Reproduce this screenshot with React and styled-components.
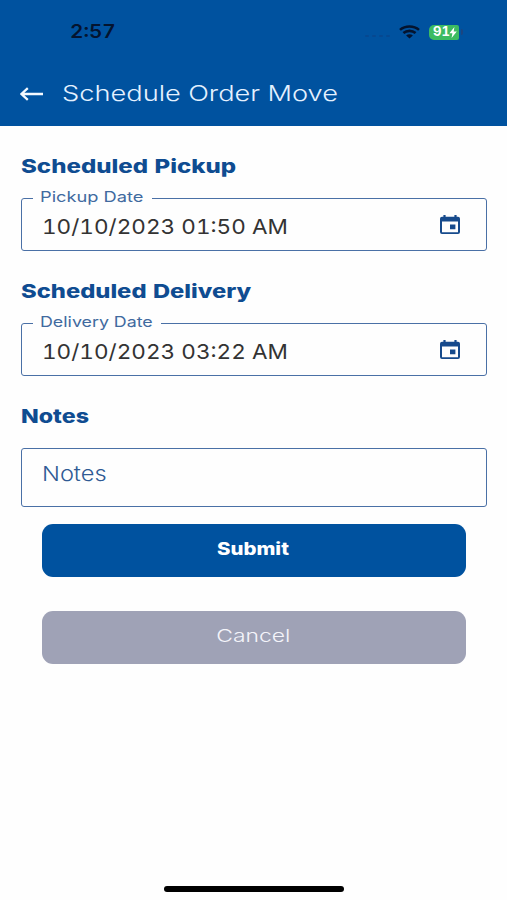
import React from 'react'
import styled, { createGlobalStyle } from 'styled-components'

const GlobalStyle = createGlobalStyle`
  * {
    box-sizing: border-box;
  }
  body {
    margin: 0;
    background: #fefefe;
    font-family: Inter, "Open Sans", sans-serif;
  }
`;
const ScreenStyle = styled.div`
  display: flex;
  flex-direction: column;
  width: 507px;
  height: 900px;
  overflow: hidden;
`;
const HeaderStyle = styled.header`
  height: 126px;
  background: #00529f;
`;
const StatusBarStyle = styled.div`
  display: flex;
  align-items: center;
  height: 64px;
  padding: 0 44px 0 70px;
`;
const StatusIconsStyle = styled.div`
  display: flex;
  align-items: center;
  margin-left: auto;
`;
const DotsStyle = styled.div`
  display: flex;
  gap: 3px;
  margin: 8px 9px 0 0;
`;
const DotStyle = styled.span`
  width: 4px;
  height: 2px;
  border-radius: 1px;
  background: #064890;
`;
const BatteryStyle = styled.div`
  display: flex;
  align-items: center;
  height: 15px;
  width: 30px;
  margin-left: 9px;
  padding-left: 4px;
  border-radius: 5px 2px 2px 5px;
  background: #3dbb61;
`;
const BatteryTipStyle = styled.span`
  width: 2px;
  height: 6px;
  margin-left: 2px;
  border-radius: 0 2px 2px 0;
  background: #1c4580;
`;
const TitleBarStyle = styled.div`
  display: flex;
  align-items: center;
  height: 57px;
  padding-left: 20px;
`;
const BackStyle = styled.svg`
  margin: 3px 18px 0 0;
`;
// wide lettering, stretched sideways from its left edge
const WideStyle = styled.span`
  display: inline-block;
  transform: scaleX(${props => props.$stretch});
  transform-origin: ${props => props.$origin || 'left'} center;
  white-space: nowrap;
  font-size: ${props => props.$size}px;
  font-weight: ${props => props.$weight || 400};
  font-variant-numeric: tabular-nums;
  line-height: 24px;
  color: ${props => props.$color};
`;
const FormStyle = styled.main`
  display: flex;
  flex-direction: column;
  flex: 1;
  padding: 27px 20px 0 21px;
`;
const HeadingStyle = styled.h2`
  height: 24px;
  margin: 0 0 21px;
  line-height: 24px;
`;
const FieldStyle = styled.div`
  position: relative;
  display: flex;
  align-items: center;
  justify-content: space-between;
  height: 53px;
  margin-bottom: 27px;
  padding: 5px 26px 0 20px;
  border: 1px solid #4a70a6;
  border-radius: 3px;
`;
const LabelStyle = styled.label`
  position: absolute;
  top: -15px;
  left: 11px;
  width: ${props => props.$width}px;
  height: 24px;
  padding-left: 7px;
  line-height: 24px;
  background: #fefefe;
`;
const CalendarStyle = styled.svg`
  margin-bottom: 6px;
`;
const NotesStyle = styled.div`
  height: 59px;
  margin-bottom: 17px;
  padding: 13px 20px;
  border: 1px solid #4a70a6;
  border-radius: 3px;
`;
const ButtonStyle = styled.button`
  display: flex;
  align-items: center;
  justify-content: center;
  height: 53px;
  margin: 0 21px 34px;
  padding: 0 2px 4px 0;
  border: none;
  border-radius: 11px;
  font-family: inherit;
  background: ${props => props.$background};
`;
const HomeBarStyle = styled.div`
  align-self: center;
  width: 180px;
  height: 6px;
  margin: 0 0 8px 1px;
  border-radius: 3px;
  background: #000;
`;

class StatusBar extends React.Component {
    render(){
        return(
          <StatusBarStyle>
            <WideStyle $size={18} $weight={600} $stretch={1.15} $color="#04142f">2:57</WideStyle>
            <StatusIconsStyle>
              <DotsStyle>
                <DotStyle /><DotStyle /><DotStyle /><DotStyle />
              </DotsStyle>
              <svg width="21" height="14" viewBox="0 0 21 14" fill="none" stroke="#04142f" strokeWidth="2.6">
                <path d="M1 4.9C6.2 0.3 14.8 0.3 20 4.9" />
                <path d="M4.4 8.1C7.9 5.1 13.1 5.1 16.6 8.1" />
                <path d="M10.5 13.4L7.1 10.4C9 8.9 12 8.9 13.9 10.4Z" fill="#04142f" stroke="none" />
              </svg>
              <BatteryStyle>
                <WideStyle $size={12.5} $weight={700} $stretch={1.05} $color="#fff">91</WideStyle>
                <svg width="8" height="11" viewBox="0 0 8 11">
                  <path d="M5.4 0L0.4 6.2H3.4L2.6 11L7.8 4.5H4.7Z" fill="#fff" />
                </svg>
              </BatteryStyle>
              <BatteryTipStyle />
            </StatusIconsStyle>
          </StatusBarStyle>
        )
    }
}

class Heading extends React.Component {
    render(){
        return(
          <HeadingStyle>
            <WideStyle $size={19} $weight={800} $stretch={this.props.stretch} $color="#0f4c91">{this.props.children}</WideStyle>
          </HeadingStyle>
        )
    }
}

class DateField extends React.Component {
    render(){
        return(
          <FieldStyle>
            <LabelStyle $width={this.props.labelWidth}>
              <WideStyle $size={14.5} $stretch={this.props.labelStretch} $color="#416a9f">{this.props.label}</WideStyle>
            </LabelStyle>
            <WideStyle $size={20.5} $stretch={1.1} $color="#333">{this.props.value}</WideStyle>
            <CalendarStyle width="20" height="19" viewBox="0 0 20 19">
              <path d="M2 1.8H18Q20 1.8 20 3.8V17Q20 19 18 19H2Q0 19 0 17V3.8Q0 1.8 2 1.8ZM2 6.4V17.2H18V6.4Z" fill="#164a8c" fillRule="evenodd" />
              <path d="M3.4 0H5.6V3H3.4ZM14.4 0H16.6V3H14.4ZM10 9.6H15.4V14.2H10Z" fill="#164a8c" />
            </CalendarStyle>
          </FieldStyle>
        )
    }
}

class App extends React.Component {
    render(){
        return(
          <ScreenStyle>
            <GlobalStyle />

            <HeaderStyle>
              <StatusBar />
              <TitleBarStyle>
                <BackStyle width="24" height="14" viewBox="0 0 24 14" fill="none" stroke="#f4f9ff" strokeWidth="2.3">
                  <path d="M23 7H1.6M7.8 1.2L1.4 7L7.8 12.8" />
                </BackStyle>
                <WideStyle $size={21.5} $weight={300} $stretch={1.267} $color="#e4f1ff">Schedule Order Move</WideStyle>
              </TitleBarStyle>
            </HeaderStyle>

            <FormStyle>
              <Heading stretch={1.265}>Scheduled Pickup</Heading>
              <DateField label="Pickup Date" labelWidth={119} labelStretch={1.26} value="10/10/2023 01:50 AM" />

              <Heading stretch={1.25}>Scheduled Delivery</Heading>
              <DateField label="Delivery Date" labelWidth={128} labelStretch={1.23} value="10/10/2023 03:22 AM" />

              <Heading stretch={1.22}>Notes</Heading>
              <NotesStyle>
                <WideStyle $size={20.5} $weight={300} $stretch={1.15} $color="#2f5a94">Notes</WideStyle>
              </NotesStyle>

              <ButtonStyle $background="#00529f">
                <WideStyle $size={17} $weight={800} $stretch={1.2} $origin="center" $color="#fff">Submit</WideStyle>
              </ButtonStyle>
              <ButtonStyle $background="#9fa2b6">
                <WideStyle $size={17.5} $weight={300} $stretch={1.31} $origin="center" $color="#f4f4fa">Cancel</WideStyle>
              </ButtonStyle>
            </FormStyle>

            <HomeBarStyle />
          </ScreenStyle>
        )
    }
}

export default App
